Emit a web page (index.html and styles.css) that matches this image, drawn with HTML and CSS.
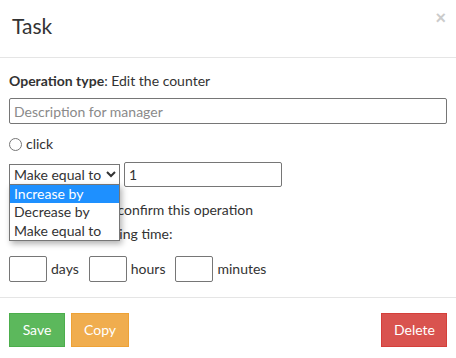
FILE: index.html
```html
<!DOCTYPE html>
<html lang="en">
<head>
<meta charset="utf-8">
<title>Task</title>
<link rel="stylesheet" href="styles.css">
</head>
<body>
<div class="modal">
  <div class="modal-header">
    <h4 class="modal-title">Task</h4>
    <button class="close" type="button">×</button>
  </div>
  <div class="modal-body">
    <p class="op"><b>Operation type</b>: Edit the counter</p>
    <input class="desc" type="text" placeholder="Description for manager">
    <label class="radio-row"><input type="radio" class="radio"> click</label>
    <div class="select-row">
      <div class="select-wrap">
        <select class="sel">
          <option>Increase by</option>
          <option>Decrease by</option>
          <option selected>Make equal to</option>
        </select>
        <ul class="dropdown">
          <li class="active">Increase by</li>
          <li>Decrease by</li>
          <li>Make equal to</li>
        </ul>
      </div>
      <input class="num" type="text" value="1">
    </div>
    <label class="check-row"><input type="checkbox" class="check"> Manager must confirm this operation</label>
    <p class="time-label">Expected performing time:</p>
    <div class="time-row">
      <input class="small" type="text"> <span>days</span>
      <input class="small" type="text"> <span>hours</span>
      <input class="small" type="text"> <span>minutes</span>
    </div>
  </div>
  <div class="modal-footer">
    <div class="left">
      <button class="btn btn-save" type="button">Save</button>
      <button class="btn btn-copy" type="button">Copy</button>
    </div>
    <button class="btn btn-delete" type="button">Delete</button>
  </div>
</div>
</body>
</html>
```
FILE: styles.css
```css
* { box-sizing: border-box; }
html, body {
  margin: 0;
  background: #fff;
}
body {
  font-family: "Lato", "Open Sans", sans-serif;
  font-size: 14px;
  line-height: 20px;
  color: #333;
}
.modal {
  width: 456px;
  height: 358px;
}
.modal-header {
  height: 58px;
  border-bottom: 1px solid #e5e5e5;
  display: flex;
  justify-content: space-between;
  align-items: flex-start;
  padding: 11px 10px 0 12px;
}
.modal-title {
  margin: 0;
  font-size: 21px;
  font-weight: 400;
  line-height: 30px;
  color: #333;
}
.close {
  border: 0;
  background: none;
  padding: 0;
  margin: 0;
  font-family: "Liberation Sans", Arial, sans-serif;
  font-size: 18px;
  line-height: 14px;
  font-weight: 700;
  color: #000;
  opacity: .2;
  margin-top: 0;
}
.modal-body {
  padding: 13px 9px 0;
  height: 239px;
}
.op {
  margin: 0;
}
.op b { font-weight: 700; }
.desc {
  display: block;
  width: 100%;
  height: 26px;
  margin-top: 7px;
  border: 1px solid #767676;
  border-radius: 2px;
  padding: 1px 4px;
  font: inherit;
  color: #333;
}
.desc::placeholder { color: #8a8a8a; }
.radio-row {
  display: flex;
  align-items: center;
  margin-top: 10px;
}
.radio {
  margin: 0 4px 0 0;
  width: 13px;
  height: 13px;
}
.select-row {
  display: flex;
  align-items: center;
  gap: 4px;
  margin-top: 8px;
}
.select-wrap {
  position: relative;
}
.sel {
  display: block;
  width: 111px;
  height: 21px;
  font: inherit;
  color: #333;
  border: 1px solid #767676;
  border-radius: 0;
  background: #fff;
  padding: 0;
}
.dropdown {
  position: absolute;
  left: 0;
  top: 20px;
  width: 111px;
  margin: 0;
  padding: 0;
  list-style: none;
  background: #fff;
  border: 1px solid #767676;
  box-shadow: 2px 3px 6px rgba(0,0,0,.3);
  z-index: 5;
}
.dropdown li {
  height: 18.4px;
  line-height: 18px;
  padding: 0 4px;
  color: #333;
}
.dropdown li.active {
  background: #1e90ff;
  color: #fff;
}
.num {
  width: 158px;
  height: 25px;
  border: 1px solid #767676;
  border-radius: 2px;
  padding: 1px 4px;
  font: inherit;
  color: #333;
}
.check-row {
  display: flex;
  align-items: center;
  margin-top: 13px;
}
.check {
  margin: 0 4px 0 0;
  width: 13px;
  height: 13px;
}
.time-label {
  margin: 4px 0 0;
}
.time-row {
  margin-top: 12px;
  display: flex;
  align-items: center;
}
.small {
  width: 38px;
  height: 26px;
  border: 1px solid #767676;
  border-radius: 2px;
  font: inherit;
  padding: 1px 4px;
}
.time-row span {
  margin: 0 10px 0 4px;
}
.modal-footer {
  border-top: 1px solid #e5e5e5;
  padding: 15px 9px 0;
  display: flex;
  justify-content: space-between;
  align-items: flex-start;
}
.left {
  display: flex;
  gap: 6px;
}
.btn {
  height: 34px;
  padding: 6px 12px;
  font: inherit;
  line-height: 20px;
  color: #fff;
  border: 1px solid transparent;
  border-radius: 0;
  cursor: pointer;
}
.btn-save { background: #5cb85c; border-color: #4cae4c; width: 56px; }
.btn-copy { background: #f0ad4e; border-color: #eea236; width: 58px; }
.btn-delete { background: #d9534f; border-color: #d43f3a; width: 66px; }
```
